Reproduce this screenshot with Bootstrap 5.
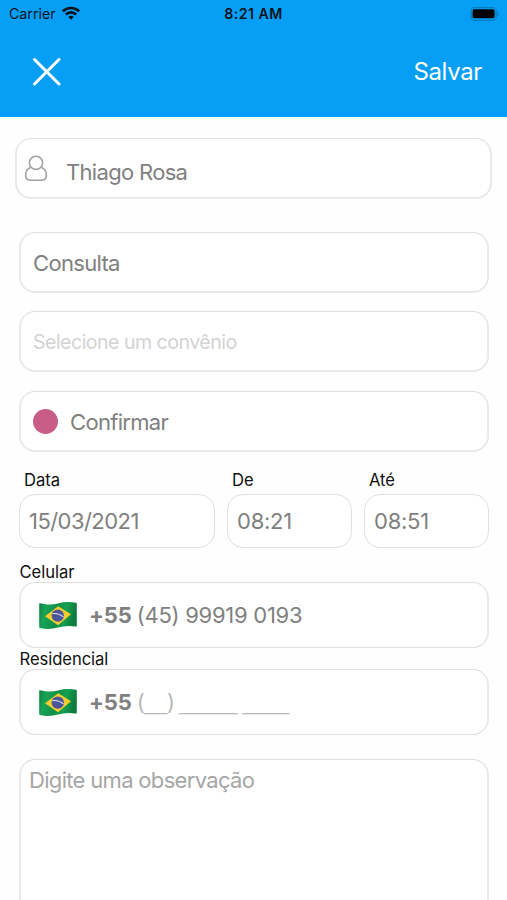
<!DOCTYPE html>
<html lang="pt-BR">
<head>
<meta charset="utf-8">
<meta name="viewport" content="width=device-width, initial-scale=1">
<title>Consulta</title>
<link href="https://cdn.jsdelivr.net/npm/bootstrap@5.3.0/dist/css/bootstrap.min.css" rel="stylesheet">
<style>
body{font-family:Inter,"Liberation Sans",sans-serif;height:900px;overflow:hidden;background:#fefefe;color:#111}
.topbar{background:#069ff5;height:117px}
.status{height:28px;font-size:14.2px;line-height:28px;color:#06121c;padding:0 7px 0 9px}
.status>*{flex:1 1 0}
.clock{letter-spacing:.45px;font-weight:600;margin-left:-2px}
.actions{height:87px;padding:0 25px 0 32px}
.save{font-size:24px;line-height:30px;color:#fff;letter-spacing:-.35px}
.field{border:solid #e9e9e9;border-width:1px 2px 2px;border-top-color:#dfdfdf;border-radius:16px;background:#fff;color:#808080;font-size:22px;line-height:28px;letter-spacing:-.68px;white-space:pre}
.patient{height:61px;margin:21px 15px 0;padding:8px 0 0 7px}
.patient .person{margin-top:-7px}
.patient-name{margin-left:18px}
.form-area{padding:33px 18px 0 19px}
.h-sel{height:61px;padding:2px 0 0 12px}
.insurer{margin-top:18px;color:#d3d3d3;font-size:19.6px;letter-spacing:-.54px}
.state{margin-top:18.5px}
.h-time{height:54px;padding-left:9px;border-width:1px;border-color:#e0e0e0;letter-spacing:-.55px}
.h-clock{letter-spacing:-.25px}
.h-phone{height:66px;padding-left:17px;letter-spacing:-.27px;border-bottom:1px solid #dfdfdf}
.cap{font-size:16.6px;line-height:20px;letter-spacing:-.05px;padding-left:.5px;white-space:nowrap}
.cap-in{padding-left:5px}
.dot{width:25px;height:25px;background:#c85e88}
.times{display:grid;grid-template-columns:196px 125px 125px;column-gap:12px;margin-top:18px}
.obs{height:170px;padding:6px 8px;color:#a6a6a6;margin-top:24px}
.flag{margin-top:2px}
.code{font-weight:700;margin-left:11px;letter-spacing:-.1px}
.num{margin-left:5px}
.mask{color:#b8b8b8;letter-spacing:-1.1px}
.blank{font-family:"Liberation Sans",sans-serif;font-size:21px;letter-spacing:0;line-height:1}
.defs{position:absolute;width:0;height:0}
</style>
<script src="https://cdn.jsdelivr.net/npm/bootstrap@5.3.0/dist/js/bootstrap.bundle.min.js" defer></script>
</head>
<body>
<svg class="defs" xmlns="http://www.w3.org/2000/svg">
  <defs>
    <linearGradient id="cloth" x1="0" x2="1" y1="0" y2=".15"><stop offset="0" stop-color="#0c7f42"/><stop offset=".2" stop-color="#18a455"/><stop offset=".5" stop-color="#109049"/><stop offset=".75" stop-color="#16a052"/><stop offset="1" stop-color="#0b7a3d"/></linearGradient>
  </defs>
  <symbol id="flag" viewBox="0 0 40 30">
    <path d="M1.2 3.200Q.8 2.400 2 2.200C9 3.900 14 4 20 2.500S31 .6 38 1.700q.8.2.8 1V24.500q0 1.300-1.200 1.100C31 24.200 26 25.100 20 26.600S8 28.500 1.900 26.900q-.7-.2-.7-1z" fill="url(#cloth)"/>
    <path d="M7 15.300 20.200 5.200 33 13.300 20 24.300z" fill="#f5ce2e"/>
    <circle cx="19.800" cy="14.600" r="6.200" fill="#4a559b"/>
    <path d="M14.500 12.700q6-1 10.900 3.200" fill="none" stroke="#d6deea" stroke-width="1.200"/>
  </symbol>
</svg>
<header class="topbar">
  <div class="status d-flex align-items-center">
    <div class="d-flex align-items-center"><span>Carrier</span>
      <svg style="margin-left:6px;margin-top:-2px" width="18" height="14" viewBox="0 0 18 14" fill="none" stroke="#06121c" stroke-width="2.600"><path d="M.9 5.300a11.500 11.500 0 0 1 16.200 0"/><path d="M3.900 8.500a7.200 7.200 0 0 1 10.200 0"/><path d="M9 13.700 6.300 11a3.900 3.900 0 0 1 5.400 0z" fill="#06121c" stroke="none"/></svg>
    </div>
    <div class="clock text-center">8:21 AM</div>
    <div class="d-flex justify-content-end"><svg style="margin-top:-1px" width="30" height="14" viewBox="0 0 30 14"><rect x="1.200" y=".7" width="25" height="12.600" rx="3.500" fill="none" stroke="#067bbd" stroke-width="1.300"/><rect x="2.600" y="2.300" width="22" height="9" rx="1.800" fill="#000"/><path d="M27.600 4.800v4.400q1.500-.7 1.500-2.200t-1.500-2.200" fill="#067bbd"/></svg></div>
  </div>
  <div class="actions d-flex justify-content-between align-items-center">
    <svg width="29" height="29" viewBox="0 0 29 29" stroke="#fff" stroke-width="3" stroke-linecap="round"><path d="M2.500 2.500l24.500 24.500M27 2.500l-24.500 24.500"/></svg>
    <span class="save">Salvar</span>
  </div>
</header>
<main>
  <div class="field patient d-flex align-items-center">
    <svg class="person" width="24" height="27" viewBox="0 0 24 27" fill="none" stroke="#a2a2a2" stroke-width="1.600"><circle cx="12" cy="7.800" r="6.600"/><path d="M7.100 12.300C3.700 13.300 1.700 16.500 1.700 20.300c0 3.600 1.300 4.900 4.300 4.900h12c3 0 4.300-1.300 4.300-4.900 0-3.800-2-7-5.400-8"/></svg>
    <span class="patient-name">Thiago Rosa</span>
  </div>
  <div class="form-area">
    <div class="field h-sel d-flex align-items-center">Consulta</div>
    <div class="field h-sel insurer d-flex align-items-center">Selecione um convênio</div>
    <div class="field h-sel state d-flex align-items-center"><span class="dot rounded-circle me-2"></span><span class="ms-1">Confirmar</span></div>
    <div class="times">
      <div><div class="cap cap-in mb-1">Data</div><div class="field h-time d-flex align-items-center">15/03/2021</div></div>
      <div><div class="cap cap-in mb-1">De</div><div class="field h-time h-clock d-flex align-items-center">08:21</div></div>
      <div><div class="cap cap-in mb-1">Até</div><div class="field h-time h-clock d-flex align-items-center">08:51</div></div>
    </div>
    <div class="cap" style="margin-top:14px">Celular</div>
    <div class="field h-phone d-flex align-items-center"><svg class="flag" width="40" height="30"><use href="#flag"/></svg><span class="code">+55</span><span class="num">(45) 99919 0193</span></div>
    <div class="cap" style="margin-top:1px">Residencial</div>
    <div class="field h-phone d-flex align-items-center"><svg class="flag" width="40" height="30"><use href="#flag"/></svg><span class="code">+55</span><span class="num mask">(<span class="blank">__</span>) <span class="blank">_____</span> <span class="blank">____</span></span></div>
    <div class="field obs">Digite uma observação</div>
  </div>
</main>
</body>
</html>
